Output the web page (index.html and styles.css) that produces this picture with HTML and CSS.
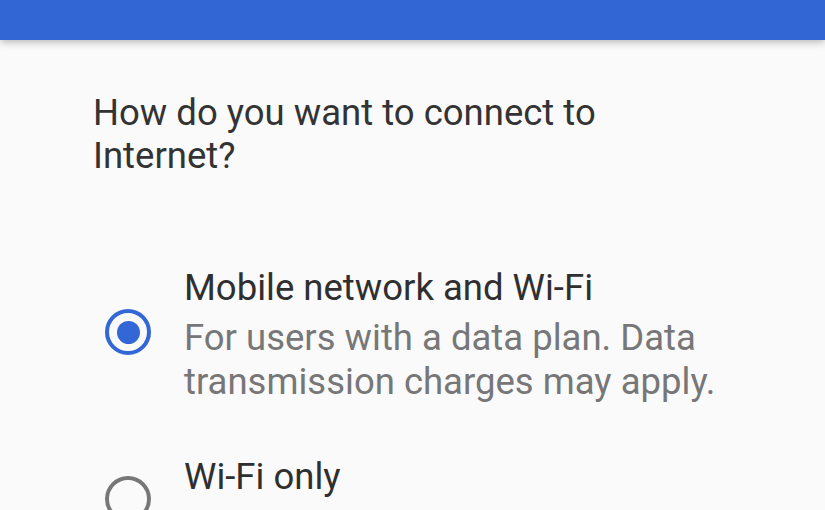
FILE: index.html
```html
<!DOCTYPE html>
<html>
<head>
<meta charset="utf-8" />
<title>Connect to Internet</title>
<link rel="stylesheet" href="styles.css">
</head>
<body>
<div class="topbar"></div>
<div class="content">
    <h1 class="question">How do you want to connect to Internet?</h1>
    <ul class="options">
        <li class="option">
            <span class="radio checked"></span>
            <div class="option-text">
                <div class="option-title">Mobile network and Wi-Fi</div>
                <div class="option-summary">For users with a data plan. Data transmission charges may apply.</div>
            </div>
        </li>
        <li class="option option-short">
            <span class="radio"></span>
            <div class="option-text">
                <div class="option-title">Wi-Fi only</div>
            </div>
        </li>
    </ul>
</div>
</body>
</html>
```

FILE: styles.css
```css
*{ margin:0; padding:0; box-sizing:border-box;}
html,body{ height:100%;}
body{ background:#fafafa; font-family:Roboto, "Noto Sans", sans-serif; overflow:hidden;}
.topbar{ height:40px; background:#3166d4; box-shadow:0 2px 8px rgba(0,0,0,0.28); position:relative; z-index:1;}
.content{ padding:51px 0 0 93px;}
.question{ font-size:36.5px; font-weight:400; line-height:43px; color:#333; width:560px;}
.options{ list-style:none; margin-top:89px; padding-left:12px;}
.option{ display:flex; align-items:flex-start; gap:33px; margin-bottom:51px;}
.radio{ width:46px; height:46px; margin-top:43px; border-radius:50%; border:4.5px solid #777; flex:none; display:flex; align-items:center; justify-content:center;}
.option-short .radio{ margin-top:21px;}
.radio.checked{ border-color:#3367d6;}
.radio.checked::after{ content:''; width:23px; height:23px; border-radius:50%; background:#3367d6;}
.option-title{ font-size:36.5px; line-height:44px; color:#2f2f2f;}
.option-summary{ font-size:36.5px; line-height:44px; color:#777; width:560px; margin-top:6px;}
```
